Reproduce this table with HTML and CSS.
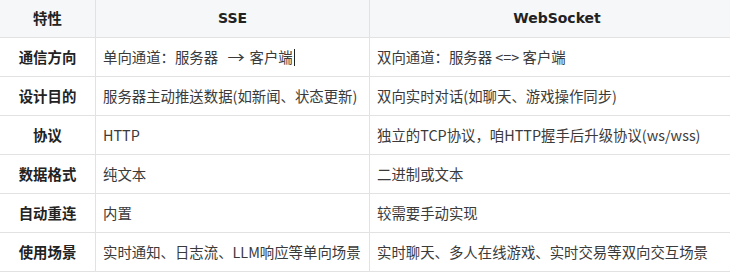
FILE: index.html
```html
<!DOCTYPE html>
<html lang="zh">
<head>
<meta charset="utf-8">
<link rel="stylesheet" href="styles.css">
</head>
<body>
<table class="cmp">
  <colgroup>
    <col class="c1"><col class="c2"><col class="c3">
  </colgroup>
  <thead>
    <tr class="head"><th>特性</th><th class="lat">SSE</th><th class="lat">WebSocket</th></tr>
  </thead>
  <tbody>
    <tr><th>通信方向</th><td>单向通道：服务器<span class="arrow">→</span>客户端<span class="caret"></span></td><td>双向通道：服务器 &lt;=&gt; 客户端</td></tr>
    <tr><th>设计目的</th><td>服务器主动推送数据(如新闻、状态更新)</td><td>双向实时对话(如聊天、游戏操作同步)</td></tr>
    <tr><th>协议</th><td>HTTP</td><td>独立的TCP协议，咱HTTP握手后升级协议(ws/wss)</td></tr>
    <tr><th>数据格式</th><td>纯文本</td><td>二进制或文本</td></tr>
    <tr><th>自动重连</th><td>内置</td><td>较需要手动实现</td></tr>
    <tr><th>使用场景</th><td>实时通知、日志流、LLM响应等单向场景</td><td>实时聊天、多人在线游戏、实时交易等双向交互场景</td></tr>
  </tbody>
</table>
</body>
</html>
```
FILE: styles.css
```css
html, body {
  margin: 0;
  padding: 0;
  background: #ffffff;
  overflow: hidden;
}
.cmp {
  border-collapse: collapse;
  table-layout: fixed;
  width: 745px;
  font-family: "Noto Sans CJK SC", "Liberation Sans", sans-serif;
  font-size: 14.4px;
  color: #333333;
  margin-left: -1px;
}
.c1 { width: 96px; }
.c2 { width: 274px; }
.c3 { width: 375px; }
.cmp th, .cmp td {
  border: 1px solid #e2e2e2;
  padding: 0 7px;
  line-height: 20px;
  height: 39px;
  box-sizing: border-box;
  white-space: nowrap;
  overflow: hidden;
}
.cmp tr.head th {
  height: 37px;
  background: #f6f7f8;
  border-top: none;
  text-align: center;
  font-weight: bold;
  color: #222;
}
.cmp th.lat {
  font-family: "DejaVu Sans", "Noto Sans CJK SC", sans-serif;
  font-size: 14px;
}
.cmp tbody th {
  text-align: center;
  font-weight: bold;
  color: #222;
}
.cmp td {
  text-align: left;
  color: #3a3a3a;
}
.arrow {
  display: inline-block;
  margin: 0 6px 0 11px;
  transform: scaleX(1.2);
}
.caret {
  display: inline-block;
  width: 1px;
  height: 17px;
  background: #222;
  vertical-align: -3px;
  margin-left: 1px;
}
```
